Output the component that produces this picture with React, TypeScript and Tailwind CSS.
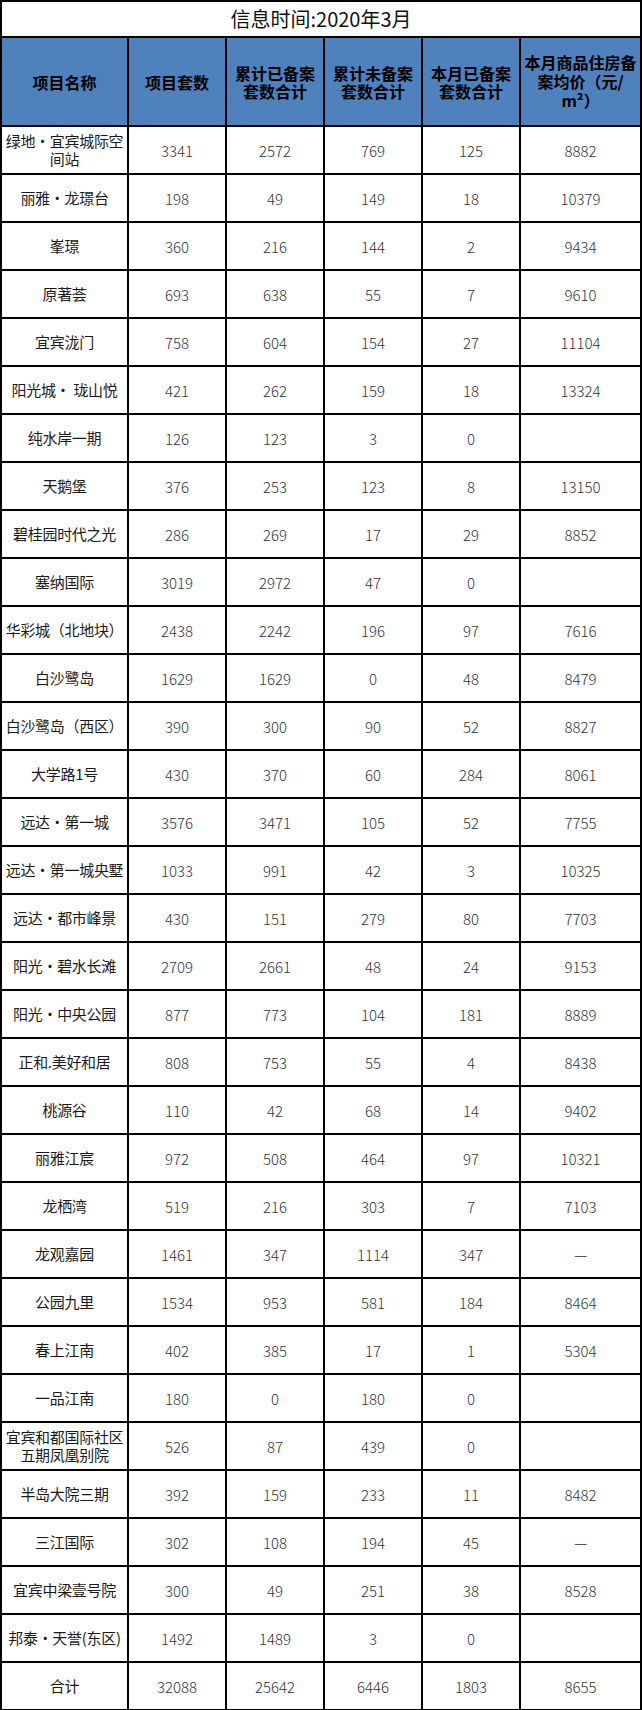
const rows: [string, string, string, string, string, string][] = [
  ["绿地·宜宾城际空\n间站", "3341", "2572", "769", "125", "8882"],
  ["丽雅·龙璟台", "198", "49", "149", "18", "10379"],
  ["峯璟", "360", "216", "144", "2", "9434"],
  ["原著荟", "693", "638", "55", "7", "9610"],
  ["宜宾泷门", "758", "604", "154", "27", "11104"],
  ["阳光城· 珑山悦", "421", "262", "159", "18", "13324"],
  ["纯水岸一期", "126", "123", "3", "0", ""],
  ["天鹅堡", "376", "253", "123", "8", "13150"],
  ["碧桂园时代之光", "286", "269", "17", "29", "8852"],
  ["塞纳国际", "3019", "2972", "47", "0", ""],
  ["华彩城（北地块）", "2438", "2242", "196", "97", "7616"],
  ["白沙鹭岛", "1629", "1629", "0", "48", "8479"],
  ["白沙鹭岛（西区）", "390", "300", "90", "52", "8827"],
  ["大学路1号", "430", "370", "60", "284", "8061"],
  ["远达·第一城", "3576", "3471", "105", "52", "7755"],
  ["远达·第一城央墅", "1033", "991", "42", "3", "10325"],
  ["远达·都市峰景", "430", "151", "279", "80", "7703"],
  ["阳光·碧水长滩", "2709", "2661", "48", "24", "9153"],
  ["阳光·中央公园", "877", "773", "104", "181", "8889"],
  ["正和.美好和居", "808", "753", "55", "4", "8438"],
  ["桃源谷", "110", "42", "68", "14", "9402"],
  ["丽雅江宸", "972", "508", "464", "97", "10321"],
  ["龙栖湾", "519", "216", "303", "7", "7103"],
  ["龙观嘉园", "1461", "347", "1114", "347", "—"],
  ["公园九里", "1534", "953", "581", "184", "8464"],
  ["春上江南", "402", "385", "17", "1", "5304"],
  ["一品江南", "180", "0", "180", "0", ""],
  ["宜宾和都国际社区\n五期凤凰别院", "526", "87", "439", "0", ""],
  ["半岛大院三期", "392", "159", "233", "11", "8482"],
  ["三江国际", "302", "108", "194", "45", "—"],
  ["宜宾中梁壹号院", "300", "49", "251", "38", "8528"],
  ["邦泰·天誉(东区)", "1492", "1489", "3", "0", ""],
  ["合计", "32088", "25642", "6446", "1803", "8655"],
];

const headers = [
  "项目名称",
  "项目套数",
  "累计已备案\n套数合计",
  "累计未备案\n套数合计",
  "本月已备案\n套数合计",
  "本月商品住房备\n案均价（元/\nm²）",
];

export default function App() {
  return (
    <div className="min-h-screen bg-white font-['Noto_Sans_CJK_SC',sans-serif] text-[#1a1a1a]">
      <table className="w-[640px] table-fixed border-collapse border-2 border-black">
        <colgroup>
          <col className="w-[127px]" />
          <col className="w-[98px]" />
          <col className="w-[98px]" />
          <col className="w-[98px]" />
          <col className="w-[98px]" />
          <col className="w-[121px]" />
        </colgroup>
        <tbody>
          <tr className="h-[36px]">
            <td colSpan={6} className="border-2 border-black text-center text-[20px] leading-none text-[#111]">
              信息时间:2020年3月
            </td>
          </tr>
          <tr className="h-[89px] bg-[#4f81bd]">
            {headers.map((h, i) => (
              <th
                key={i}
                className={
                  i === 5
                    ? "border-2 border-black px-0.5 text-center text-[16px] font-bold leading-[19px] whitespace-pre-line text-black"
                    : "border-2 border-black px-0.5 text-center text-[16px] font-bold leading-[18px] whitespace-pre-line text-black"
                }
              >
                {h}
              </th>
            ))}
          </tr>
          {rows.map((r, idx) => (
            <tr key={idx} className="h-[48px]">
              {r.map((c, i) => (
                <td
                  key={i}
                  className={
                    i === 0
                      ? "border-2 border-black px-0.5 text-center text-[15px] leading-[18px] whitespace-pre-line tracking-[-0.3px]"
                      : "border-2 border-black text-center text-[15px] leading-none font-light text-[#333]"
                  }
                >
                  {c}
                </td>
              ))}
            </tr>
          ))}
        </tbody>
      </table>
    </div>
  );
}
